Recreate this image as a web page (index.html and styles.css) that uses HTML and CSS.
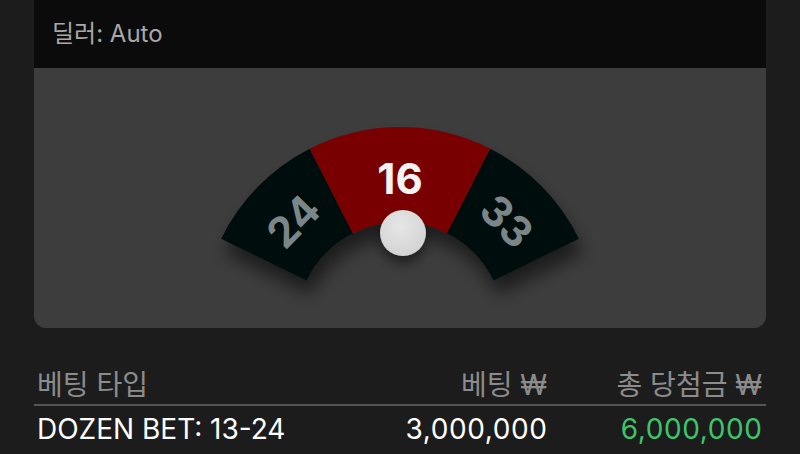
FILE: index.html
```html
<!DOCTYPE html>
<html lang="ko">
<head>
    <meta charset="UTF-8">
    <meta name="viewport" content="width=device-width, initial-scale=1.0">
    <title>Result</title>
    <link rel="stylesheet" href="styles.css">
</head>
<body>
    <div class="wrap">
        <div class="dealer">딜러: Auto</div>

        <div class="wheel-panel">
            <svg class="wheel" width="420" height="200" viewBox="0 0 420 200">
                <defs>
                    <filter id="segShadow" x="-20%" y="-20%" width="140%" height="170%">
                        <feDropShadow dx="4" dy="14" stdDeviation="9" flood-color="#000" flood-opacity="0.55"/>
                    </filter>
                    <filter id="ballShadow" x="-50%" y="-50%" width="200%" height="220%">
                        <feDropShadow dx="0" dy="8" stdDeviation="6" flood-color="#000" flood-opacity="0.45"/>
                    </filter>
                    <radialGradient id="ballFill" cx="45%" cy="35%" r="70%">
                        <stop offset="0" stop-color="#e6e6e6"/>
                        <stop offset="1" stop-color="#d2d2d2"/>
                    </radialGradient>
                </defs>
                <g filter="url(#segShadow)">
                    <path class="seg-black" d="M31.1 123.8 A199 199 0 0 1 119.7 33.7 L162.8 118.3 A104 104 0 0 0 116.5 165.4 Z"/>
                    <path class="seg-red" d="M119.7 33.7 A199 199 0 0 1 300.3 33.7 L257.2 118.3 A104 104 0 0 0 162.8 118.3 Z"/>
                    <path class="seg-black" d="M300.3 33.7 A199 199 0 0 1 388.9 123.8 L303.5 165.4 A104 104 0 0 0 257.2 118.3 Z"/>
                </g>
                <text class="num num-side" x="210" y="61" transform="rotate(-45.5 210 211)">24</text>
                <text class="num num-win" x="210" y="63">16</text>
                <text class="num num-side" x="210" y="61" transform="rotate(45.5 210 211)">33</text>
                <circle cx="213" cy="118" r="23" fill="url(#ballFill)" filter="url(#ballShadow)"/>
            </svg>
        </div>

        <div class="bets">
            <div class="bet-row bet-head">
                <div>베팅 타입</div>
                <div class="num-col">베팅 ₩</div>
                <div class="num-col">총 당첨금 ₩</div>
            </div>
            <div class="bet-row">
                <div>DOZEN BET: 13-24</div>
                <div class="num-col amount">3,000,000</div>
                <div class="num-col amount win">6,000,000</div>
            </div>
        </div>
    </div>
</body>
</html>
```

FILE: styles.css
```css
body {
    margin: 0;
    background-color: #1c1c1c;
    font-family: Inter, "Noto Sans CJK KR", sans-serif;
    overflow: hidden;
}
.wrap {
    margin: 0 34px;
}
.dealer {
    height: 68px;
    line-height: 68px;
    padding-left: 18px;
    background-color: #0b0b0b;
    color: #a8a8a8;
    font-size: 24px;
}
.wheel-panel {
    height: 260px;
    box-sizing: border-box;
    padding-top: 47px;
    display: flex;
    justify-content: center;
    align-items: flex-start;
    background-color: #3d3d3d;
    border-radius: 0 0 12px 12px;
}
.wheel {
    display: block;
}
.seg-red {
    fill: #790303;
}
.seg-black {
    fill: #031111;
}
.num {
    font-family: Inter, sans-serif;
    font-weight: 700;
    font-size: 42px;
    text-anchor: middle;
    dominant-baseline: central;
}
.num-win {
    fill: #f4f4f4;
}
.num-side {
    fill: #7c8688;
}
.bets {
    padding-top: 38px;
}
.bet-row {
    display: grid;
    grid-template-columns: 1fr 200px 215px;
    padding: 0 4px 0 3px;
    font-size: 28px;
    line-height: 46px;
    color: #ffffff;
}
.bet-head {
    line-height: 38px;
    border-bottom: 2px solid #555555;
    color: #8c8c8c;
}
.num-col {
    text-align: right;
}
.amount {
    letter-spacing: 0.6px;
    margin-right: -0.6px;
}
.win {
    color: #3ec46d;
}
```
